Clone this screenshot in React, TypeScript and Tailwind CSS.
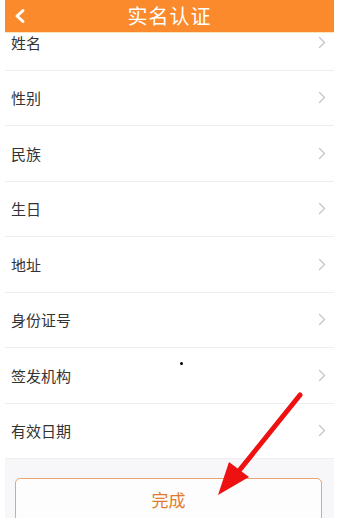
import React from 'react'

const FIELDS = ['姓名', '性别', '民族', '生日', '地址', '身份证号', '签发机构', '有效日期']

const FONT = { fontFamily: '"Noto Sans CJK SC", "Noto Sans", sans-serif' }

function Chevron({ className }: { className?: string }) {
  return (
    <svg width="8" height="13" viewBox="0 0 8 13" className={className} fill="none">
      <path d="M1.5 1.5 L6.5 6.5 L1.5 11.5" stroke="currentColor" strokeWidth="1.3" strokeLinecap="round" strokeLinejoin="round" />
    </svg>
  )
}

export default function App() {
  return (
    <div className="relative w-[347px] h-[518px] overflow-hidden bg-white" style={FONT}>
      <div className="ml-[5px] w-[329px] h-full flex flex-col bg-[#f7f7f9]">
        {/* header */}
        <div className="relative z-10 h-[33px] shrink-0 bg-[#fb8a2d] flex items-center border-b border-[#fde3b8]">
          <svg width="14" height="16" viewBox="0 0 14 16" className="ml-[8px] text-white" fill="none">
            <path d="M10 2.5 L4 8 L10 13.5" stroke="currentColor" strokeWidth="3" strokeLinecap="round" strokeLinejoin="round" />
          </svg>
          <div className="flex-1 text-center text-white text-[20px] leading-none mr-[22px] tracking-[1px]">实名认证</div>
        </div>

        {/* list, scrolled a bit under the header */}
        <div className="overflow-hidden shrink-0">
          <div className="-mt-[18px] bg-white">
            {FIELDS.map(f => (
              <div key={f} className="h-[55.5px] flex items-center border-b border-[#eeeef0] pl-[6px] pr-[8px]">
                <span className="flex-1 text-[15px] text-[#333333] leading-none">{f}</span>
                <Chevron className="text-[#c4c4c6]" />
              </div>
            ))}
          </div>
        </div>

        {/* bottom */}
        <div className="pt-[19px] px-[10px]">
          <button className="w-[307px] h-[44px] rounded-[5px] border border-[#e9a672] bg-[#fdfdfd] text-[#e27a2c] text-[17px] flex items-center justify-center">
            完成
          </button>
        </div>
      </div>

      {/* stray dot */}
      <div className="absolute left-[180px] top-[362px] w-[3px] h-[3px] bg-black rounded-full" />

      {/* red annotation arrow */}
      <svg className="absolute left-0 top-0 pointer-events-none" width="347" height="518" viewBox="0 0 347 518">
        <line x1="300" y1="395" x2="238" y2="472" stroke="#ee1111" strokeWidth="5" strokeLinecap="round" />
        <polygon points="218,495 229,462 249,477" fill="#ee1111" />
      </svg>
    </div>
  )
}
